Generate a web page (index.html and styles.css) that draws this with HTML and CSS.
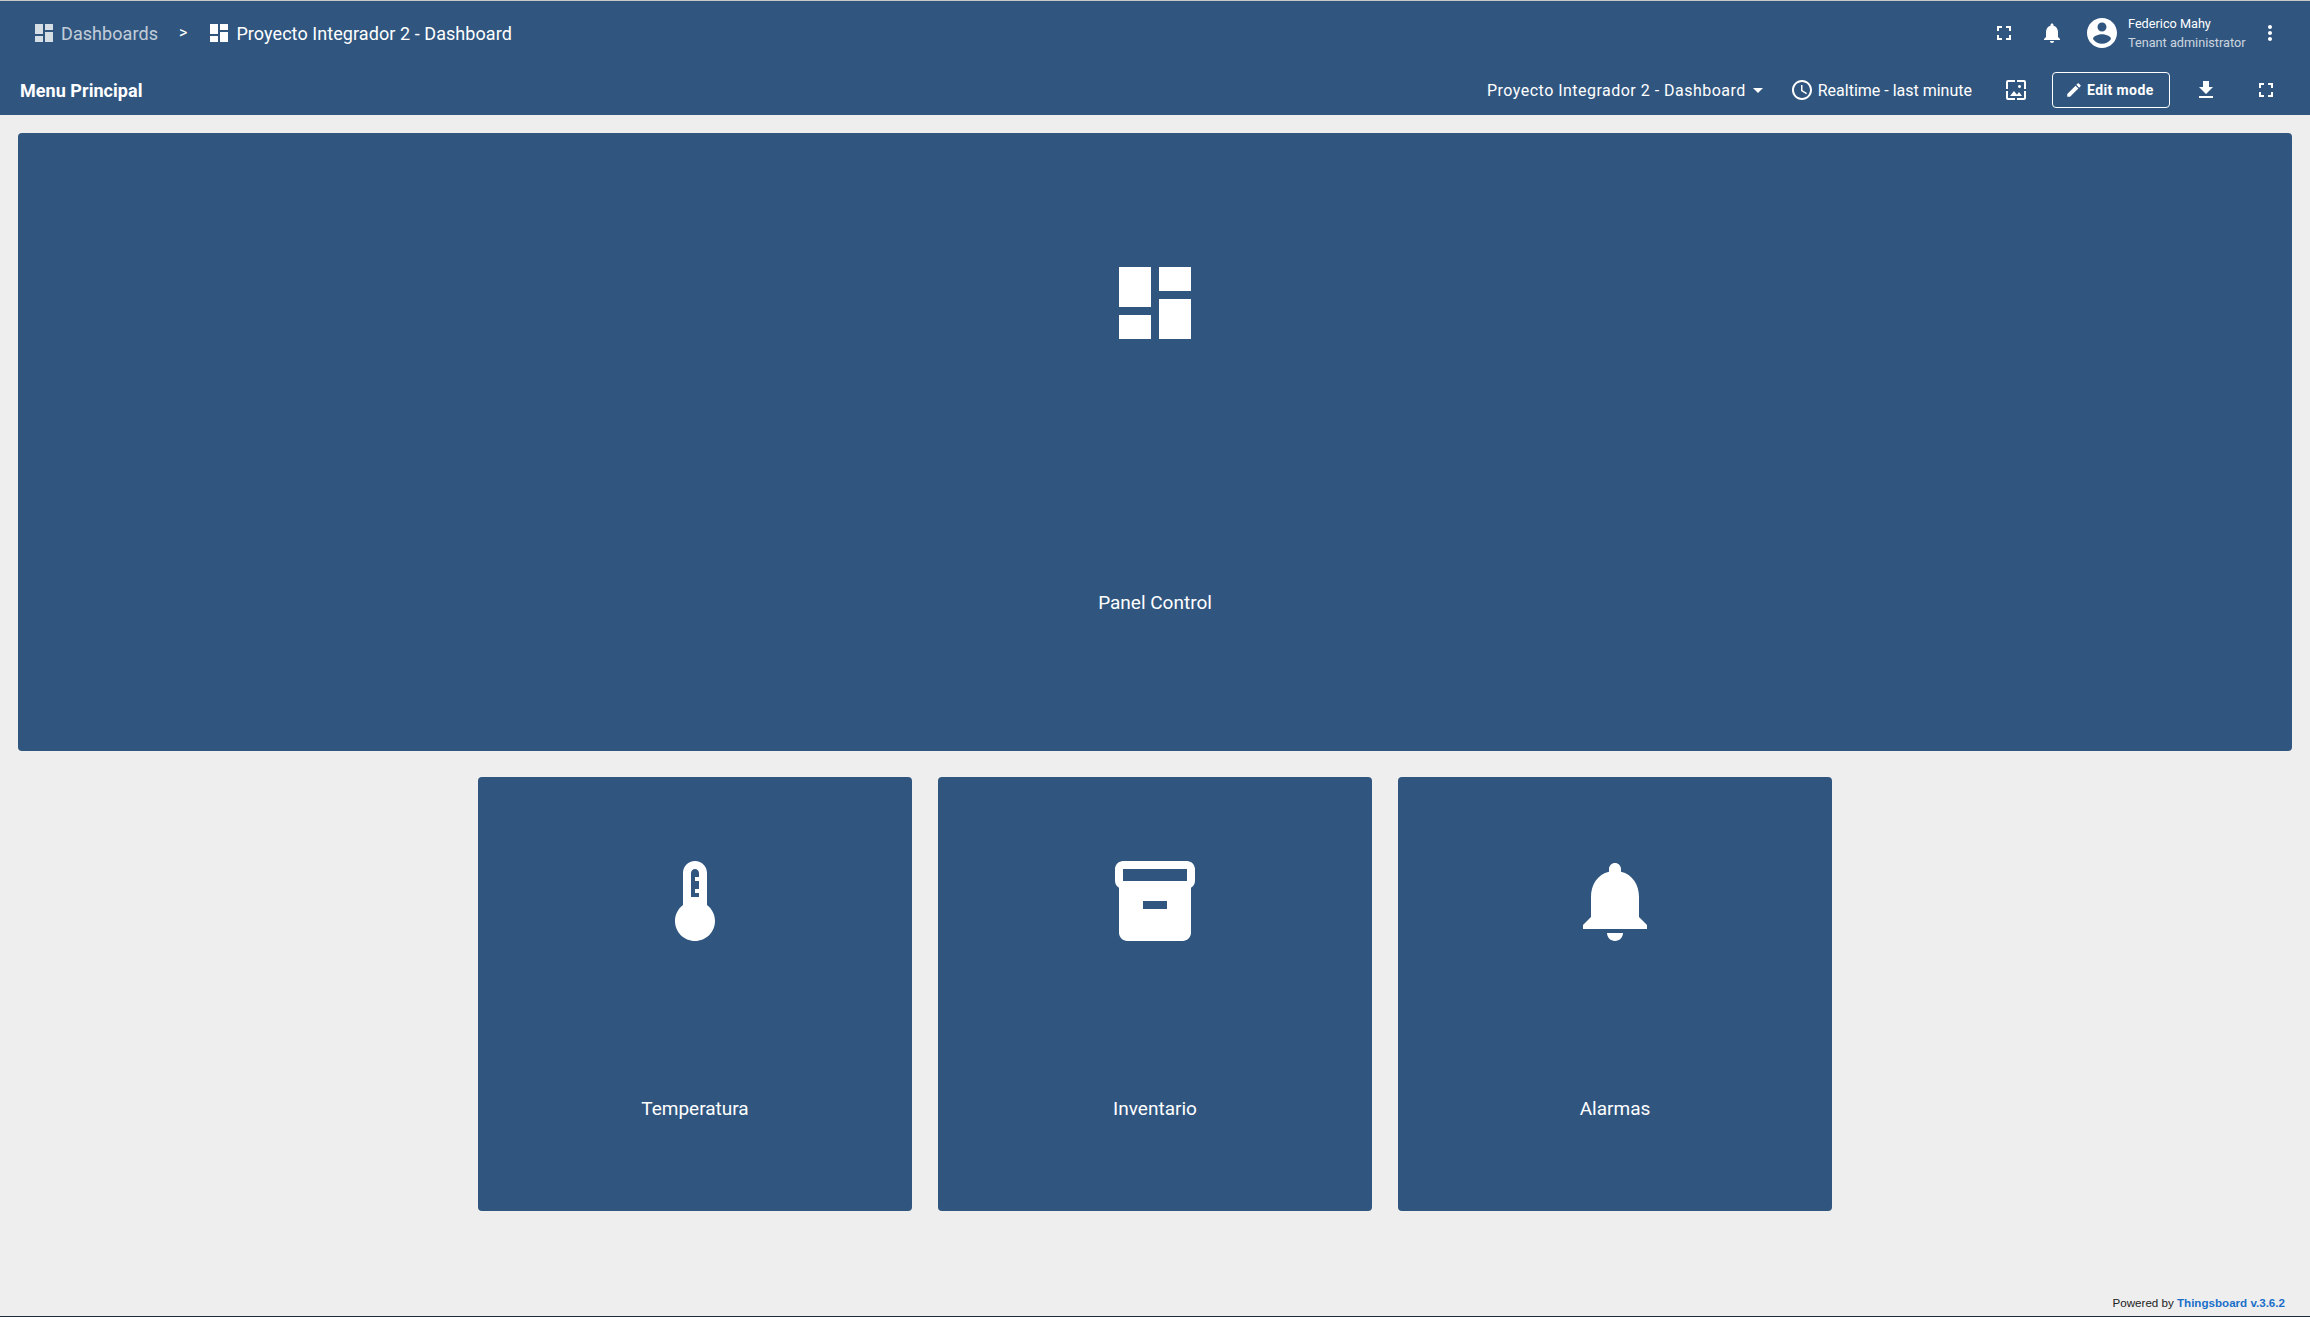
FILE: index.html
```html
<!DOCTYPE html>
<html lang="es">
<head>
  <meta charset="UTF-8" />
  <meta name="viewport" content="width=device-width, initial-scale=1.0"/>
  <title>Proyecto Integrador 2 - Dashboard</title>
  <link rel="stylesheet" href="styles.css">
</head>
<body>
  <header class="header">
    <div class="top-row">
      <nav class="crumbs">
        <svg class="icon crumb-icon dim" viewBox="0 0 24 24"><path d="M3 13h8V3H3v10zm0 8h8v-6H3v6zm10 0h8V11h-8v10zm0-18v6h8V3h-8z"/></svg>
        <span class="crumb dim-text">Dashboards</span>
        <span class="crumb-sep">&gt;</span>
        <svg class="icon crumb-icon" viewBox="0 0 24 24"><path d="M3 13h8V3H3v10zm0 8h8v-6H3v6zm10 0h8V11h-8v10zm0-18v6h8V3h-8z"/></svg>
        <span class="crumb">Proyecto Integrador 2 - Dashboard</span>
      </nav>
      <div class="user-area">
        <svg class="icon" viewBox="0 0 24 24"><path d="M7 14H5v5h5v-2H7v-3zm-2-4h2V7h3V5H5v5zm12 7h-3v2h5v-5h-2v3zM14 5v2h3v3h2V5h-5z"/></svg>
        <svg class="icon bell" viewBox="0 0 24 24"><path d="M12 22c1.1 0 2-.9 2-2h-4c0 1.1.89 2 2 2zm6-6v-5c0-3.07-1.64-5.64-4.5-6.32V4c0-.83-.67-1.5-1.5-1.5s-1.5.67-1.5 1.5v.68C7.63 5.36 6 7.92 6 11v5l-2 2v1h16v-1l-2-2z"/></svg>
        <svg class="icon avatar" viewBox="0 0 24 24"><path d="M12 2C6.48 2 2 6.48 2 12s4.48 10 10 10 10-4.48 10-10S17.52 2 12 2zm0 3c1.66 0 3 1.34 3 3s-1.34 3-3 3-3-1.34-3-3 1.34-3 3-3zm0 14.2c-2.5 0-4.71-1.28-6-3.22.03-1.99 4-3.08 6-3.08 1.99 0 5.97 1.09 6 3.08-1.29 1.94-3.5 3.22-6 3.22z"/></svg>
        <div class="user-info">
          <div class="user-name">Federico Mahy</div>
          <div class="user-role">Tenant administrator</div>
        </div>
        <svg class="icon" viewBox="0 0 24 24"><path d="M12 8c1.1 0 2-.9 2-2s-.9-2-2-2-2 .9-2 2 .9 2 2 2zm0 2c-1.1 0-2 .9-2 2s.9 2 2 2 2-.9 2-2-.9-2-2-2zm0 6c-1.1 0-2 .9-2 2s.9 2 2 2 2-.9 2-2-.9-2-2-2z"/></svg>
      </div>
    </div>
    <div class="bottom-row">
      <div class="state-title">Menu Principal</div>
      <div class="tools">
        <span class="tool-text dash-name">Proyecto Integrador 2 - Dashboard</span>
        <svg class="icon caret" viewBox="0 0 24 24"><path d="M7 10l5 5 5-5z"/></svg>
        <svg class="icon clock" viewBox="0 0 24 24"><path d="M11.99 2C6.47 2 2 6.48 2 12s4.47 10 9.99 10C17.52 22 22 17.52 22 12S17.52 2 11.99 2zM12 20c-4.42 0-8-3.58-8-8s3.58-8 8-8 8 3.58 8 8-3.58 8-8 8zm.5-13H11v6l5.25 3.15.75-1.23-4.5-2.67z"/></svg>
        <span class="tool-text">Realtime - last minute</span>
        <svg class="icon wallpaper" viewBox="0 0 24 24"><path d="M4 4h7V2H4c-1.1 0-2 .9-2 2v7h2V4zm6 9l-4 5h12l-3-4-2.03 2.71L10 13zm7-4.5c0-.83-.67-1.5-1.5-1.5S14 7.67 14 8.5s.67 1.5 1.5 1.5S17 9.33 17 8.5zM20 2h-7v2h7v7h2V4c0-1.1-.9-2-2-2zm0 18h-7v2h7c1.1 0 2-.9 2-2v-7h-2v7zM4 13H2v7c0 1.1.9 2 2 2h7v-2H4v-7z"/></svg>
        <button class="edit-btn">
          <svg class="icon pencil" viewBox="0 0 24 24"><path d="M3 17.25V21h3.75L17.81 9.94l-3.75-3.75L3 17.25zM20.71 7.04c.39-.39.39-1.02 0-1.41l-2.34-2.34c-.39-.39-1.02-.39-1.41 0l-1.83 1.83 3.75 3.75 1.83-1.83z"/></svg>
          Edit mode
        </button>
        <svg class="icon download" viewBox="0 0 24 24"><path d="M19 9h-4V3H9v6H5l7 7 7-7zM5 18v2h14v-2H5z"/></svg>
        <svg class="icon expand" viewBox="0 0 24 24"><path d="M7 14H5v5h5v-2H7v-3zm-2-4h2V7h3V5H5v5zm12 7h-3v2h5v-5h-2v3zM14 5v2h3v3h2V5h-5z"/></svg>
      </div>
    </div>
  </header>

  <main class="content">
    <a class="card card-main">
      <svg class="icon card-icon" viewBox="0 0 24 24"><path d="M3 13h8V3H3v10zm0 8h8v-6H3v6zm10 0h8V11h-8v10zm0-18v6h8V3h-8z"/></svg>
      <div class="card-label">Panel Control</div>
    </a>
    <div class="card-row">
      <a class="card card-small">
        <svg class="icon card-icon" viewBox="0 0 24 24"><path d="M15 13V5c0-1.66-1.34-3-3-3S9 3.34 9 5v8c-1.21.91-2 2.37-2 4 0 2.76 2.24 5 5 5s5-2.24 5-5c0-1.63-.79-3.09-2-4zm-4-2V5c0-.55.45-1 1-1s1 .45 1 1v1h-1v1h1v2h-1v1h1v1h-2z"/></svg>
        <div class="card-label">Temperatura</div>
      </a>
      <a class="card card-small">
        <svg class="icon card-icon" viewBox="0 0 24 24"><path d="M20 2H4c-1 0-2 .9-2 2v3.01c0 .72.43 1.34 1 1.69V20c0 1.1 1.1 2 2 2h14c.9 0 2-.9 2-2V8.7c.57-.35 1-.97 1-1.69V4c0-1.1-1-2-2-2zm-5 12H9v-2h6v2zm5-7H4V4l16-.02V7z"/></svg>
        <div class="card-label">Inventario</div>
      </a>
      <a class="card card-small">
        <svg class="icon card-icon" viewBox="0 0 24 24"><path d="M12 22c1.1 0 2-.9 2-2h-4c0 1.1.89 2 2 2zm6-6v-5c0-3.07-1.64-5.64-4.5-6.32V4c0-.83-.67-1.5-1.5-1.5s-1.5.67-1.5 1.5v.68C7.63 5.36 6 7.92 6 11v5l-2 2v1h16v-1l-2-2z"/></svg>
        <div class="card-label">Alarmas</div>
      </a>
    </div>
  </main>

  <footer class="footer">Powered by <span class="footer-link">Thingsboard v.3.6.2</span></footer>
</body>
</html>
```

FILE: styles.css
```css
* { box-sizing: border-box; }
html, body { height: 100%; }
body {
  margin: 0;
  display: flex;
  flex-direction: column;
  background: #eeeeee;
  font-family: Roboto, Arial, sans-serif;
  color: #fff;
  border-top: 1px solid #c9c9c9;
  border-bottom: 1px solid #1d2c3d;
}

.icon { width: 24px; height: 24px; fill: currentColor; flex: none; display: block; }

.header { background: #305680; height: 114px; flex: none; }
.top-row { height: 64px; display: flex; align-items: center; justify-content: space-between; padding: 0 28px 0 32px; }
.bottom-row { height: 50px; display: flex; align-items: center; justify-content: space-between; padding: 0 32px 0 20px; }

.crumbs { display: flex; align-items: center; }
.crumb { font-size: 18px; letter-spacing: .07px; }
.crumb-icon { margin-right: 5px; }
.dim { opacity: .8; }
.dim-text { opacity: .7; }
.crumb-sep { font-size: 16px; margin: 0 20px 0 21px; position: relative; top: -1px; }

.user-area { display: flex; align-items: center; }
.bell { margin-left: 24px; }
.avatar { width: 36px; height: 36px; margin-left: 20px; }
.user-info { width: 130px; margin-left: 8px; font-size: 12.7px; line-height: 19px; }
.user-role { opacity: .75; }

.state-title { font-size: 18px; font-weight: 700; letter-spacing: .05px; }
.tools { display: flex; align-items: center; }
.tool-text { font-size: 16px; }
.dash-name { letter-spacing: .48px; }
.clock { margin-left: 20px; margin-right: 4px; }
.wallpaper { margin-left: 32px; }
.edit-btn {
  width: 118px;
  height: 36px;
  margin-left: 24px;
  display: flex;
  align-items: center;
  padding: 0 0 0 12px;
  background: none;
  border: 1px solid #fff;
  border-radius: 4px;
  color: #fff;
  font: 700 14px Roboto, Arial, sans-serif;
  letter-spacing: .4px;
}
.pencil { width: 18px; height: 18px; margin-right: 4px; }
.download { margin-left: 24px; }
.expand { margin-left: 36px; }

.content { flex: 1; padding: 18px 18px 0; }
.card {
  display: flex;
  flex-direction: column;
  justify-content: space-around;
  align-items: center;
  padding: 8px;
  background: #305680;
  border-radius: 4px;
}
.card-main { height: 618px; }
.card-row { display: flex; justify-content: center; gap: 26px; margin-top: 26px; }
.card-small { width: 434px; height: 434px; }
.card-icon { width: 96px; height: 96px; }
.card-label { font-size: 19px; line-height: 48px; padding-bottom: 2px; }

.footer { flex: none; height: 20px; padding-right: 25px; text-align: right; font: 11.6px "Liberation Sans", Arial, sans-serif; color: #222; }
.footer-link { font-weight: 700; color: #1a6fc9; }
```
